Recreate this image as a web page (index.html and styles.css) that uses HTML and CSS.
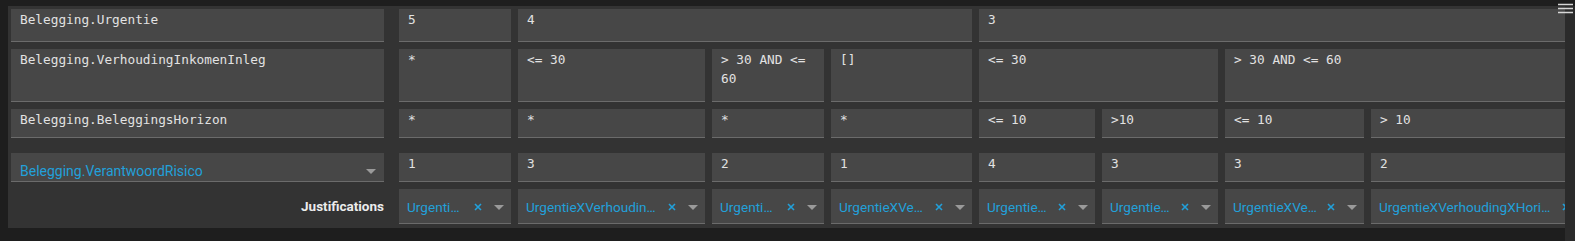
FILE: index.html
```html
<!DOCTYPE html>
<html>
<head>
  <meta charset="UTF-8">
  <title>Beslistabel Belegging</title>
  <link rel="stylesheet" href="styles.css">
</head>
<body>
  <button class="menu-btn" title="Menu">
    <svg width="15" height="11" viewBox="0 0 15 11"><path d="M0 1.5h15M0 5.5h15M0 9.5h15" stroke="#d6d6d6" stroke-width="1.4"/></svg>
  </button>

  <div class="frame">
    <div class="table-scroll">
      <div class="dtable">
        <!-- inputs -->
        <div class="cell label r1">Belegging.Urgentie</div>
        <div class="cell r1">5</div>
        <div class="cell r1 span3">4</div>
        <div class="cell r1 span4">3</div>

        <div class="cell label r2">Belegging.VerhoudingInkomenInleg</div>
        <div class="cell r2">*</div>
        <div class="cell r2">&lt;= 30</div>
        <div class="cell r2">&gt; 30 AND &lt;= 60</div>
        <div class="cell r2">[]</div>
        <div class="cell r2 span2">&lt;= 30</div>
        <div class="cell r2 span2">&gt; 30 AND &lt;= 60</div>

        <div class="cell label r3">Belegging.BeleggingsHorizon</div>
        <div class="cell r3">*</div>
        <div class="cell r3">*</div>
        <div class="cell r3">*</div>
        <div class="cell r3">*</div>
        <div class="cell r3">&lt;= 10</div>
        <div class="cell r3">&gt;10</div>
        <div class="cell r3">&lt;= 10</div>
        <div class="cell r3">&gt; 10</div>

        <!-- output -->
        <div class="cell select r4">
          <span class="select-text">Belegging.VerantwoordRisico</span>
          <svg class="caret" width="10" height="5" viewBox="0 0 10 5"><path d="M0 0h10L5 5z" fill="#9a9a9a"/></svg>
        </div>
        <div class="cell r4">1</div>
        <div class="cell r4">3</div>
        <div class="cell r4">2</div>
        <div class="cell r4">1</div>
        <div class="cell r4">4</div>
        <div class="cell r4">3</div>
        <div class="cell r4">3</div>
        <div class="cell r4">2</div>

        <!-- justifications -->
        <div class="row-title">Justifications</div>
        <div class="cell tag"><span class="tag-text">Urgenti…</span><svg class="clear" width="8" height="8" viewBox="0 0 8 8"><path d="M1 1l6 6M7 1L1 7" stroke="#22a0da" stroke-width="1.6"/></svg><svg class="caret" width="10" height="5" viewBox="0 0 10 5"><path d="M0 0h10L5 5z" fill="#9a9a9a"/></svg></div>
        <div class="cell tag"><span class="tag-text">UrgentieXVerhoudin…</span><svg class="clear" width="8" height="8" viewBox="0 0 8 8"><path d="M1 1l6 6M7 1L1 7" stroke="#22a0da" stroke-width="1.6"/></svg><svg class="caret" width="10" height="5" viewBox="0 0 10 5"><path d="M0 0h10L5 5z" fill="#9a9a9a"/></svg></div>
        <div class="cell tag"><span class="tag-text">Urgenti…</span><svg class="clear" width="8" height="8" viewBox="0 0 8 8"><path d="M1 1l6 6M7 1L1 7" stroke="#22a0da" stroke-width="1.6"/></svg><svg class="caret" width="10" height="5" viewBox="0 0 10 5"><path d="M0 0h10L5 5z" fill="#9a9a9a"/></svg></div>
        <div class="cell tag"><span class="tag-text">UrgentieXVe…</span><svg class="clear" width="8" height="8" viewBox="0 0 8 8"><path d="M1 1l6 6M7 1L1 7" stroke="#22a0da" stroke-width="1.6"/></svg><svg class="caret" width="10" height="5" viewBox="0 0 10 5"><path d="M0 0h10L5 5z" fill="#9a9a9a"/></svg></div>
        <div class="cell tag"><span class="tag-text">Urgentie…</span><svg class="clear" width="8" height="8" viewBox="0 0 8 8"><path d="M1 1l6 6M7 1L1 7" stroke="#22a0da" stroke-width="1.6"/></svg><svg class="caret" width="10" height="5" viewBox="0 0 10 5"><path d="M0 0h10L5 5z" fill="#9a9a9a"/></svg></div>
        <div class="cell tag"><span class="tag-text">Urgentie…</span><svg class="clear" width="8" height="8" viewBox="0 0 8 8"><path d="M1 1l6 6M7 1L1 7" stroke="#22a0da" stroke-width="1.6"/></svg><svg class="caret" width="10" height="5" viewBox="0 0 10 5"><path d="M0 0h10L5 5z" fill="#9a9a9a"/></svg></div>
        <div class="cell tag"><span class="tag-text">UrgentieXVe…</span><svg class="clear" width="8" height="8" viewBox="0 0 8 8"><path d="M1 1l6 6M7 1L1 7" stroke="#22a0da" stroke-width="1.6"/></svg><svg class="caret" width="10" height="5" viewBox="0 0 10 5"><path d="M0 0h10L5 5z" fill="#9a9a9a"/></svg></div>
        <div class="cell tag"><span class="tag-text">UrgentieXVerhoudingXHori…</span><svg class="clear" width="8" height="8" viewBox="0 0 8 8"><path d="M1 1l6 6M7 1L1 7" stroke="#22a0da" stroke-width="1.6"/></svg><svg class="caret" width="10" height="5" viewBox="0 0 10 5"><path d="M0 0h10L5 5z" fill="#9a9a9a"/></svg></div>
      </div>
    </div>
    <div class="rail"></div>
  </div>
</body>
</html>
```

FILE: styles.css
```css
body { margin: 0; background: #1e1e1e; font-family: Roboto, "Noto Sans", sans-serif; }
.menu-btn { position: absolute; top: 3px; left: 1558px; width: 15px; height: 11px; padding: 0; border: 0; background: none; display: block; }
.menu-btn svg { display: block; }

.frame { display: flex; align-items: flex-start; margin-top: 6px; height: 235px; }
.table-scroll { flex: 1; min-width: 0; margin-left: 8px; overflow: hidden; background: #333333; padding: 3px 0 4px 3px; }
.rail { width: 10px; align-self: stretch; background: #2b2b2b; }

.dtable { display: grid; grid-template-columns: 381px 112px 187px 112px 141px 116px 116px 139px 228px; column-gap: 7px; row-gap: 7px; width: max-content; }

.cell { box-sizing: border-box; background: #474747; border-bottom: 1px solid #6b6b6b; padding: 1px 9px 0; font-family: "DejaVu Sans Mono", "Liberation Mono", monospace; font-size: 12.75px; line-height: 19px; color: #e2e2e2; overflow: hidden; }
.label { margin-right: 8px; }
.span2 { grid-column: span 2; }
.span3 { grid-column: span 3; }
.span4 { grid-column: span 4; }

.r1 { height: 33px; }
.r2 { height: 53px; }
.r3 { height: 29px; }
.r4 { height: 29px; margin-top: 8px; }

.select { display: flex; align-items: flex-start; padding: 10px 8px 0 9px; margin-right: 8px; }
.select-text { flex: 1; font-family: Roboto, sans-serif; font-size: 14px; line-height: 16px; color: #22a0da; white-space: nowrap; }
.select .caret { margin-top: 6px; }

.row-title { height: 35px; box-sizing: border-box; padding-top: 9px; margin-right: 8px; text-align: right; font-family: Roboto, sans-serif; font-weight: bold; font-size: 13.5px; line-height: 16px; color: #ececec; }

.tag { height: 35px; display: flex; align-items: center; padding: 2px 7px 0 8px; }
.tag-text { flex: 1; min-width: 0; overflow: hidden; text-overflow: ellipsis; white-space: nowrap; font-family: Roboto, sans-serif; font-size: 13.6px; line-height: 16px; color: #22a0da; }
.tag .clear { flex: none; margin-left: 8px; }
.tag .caret { flex: none; margin-left: 12px; }
```
